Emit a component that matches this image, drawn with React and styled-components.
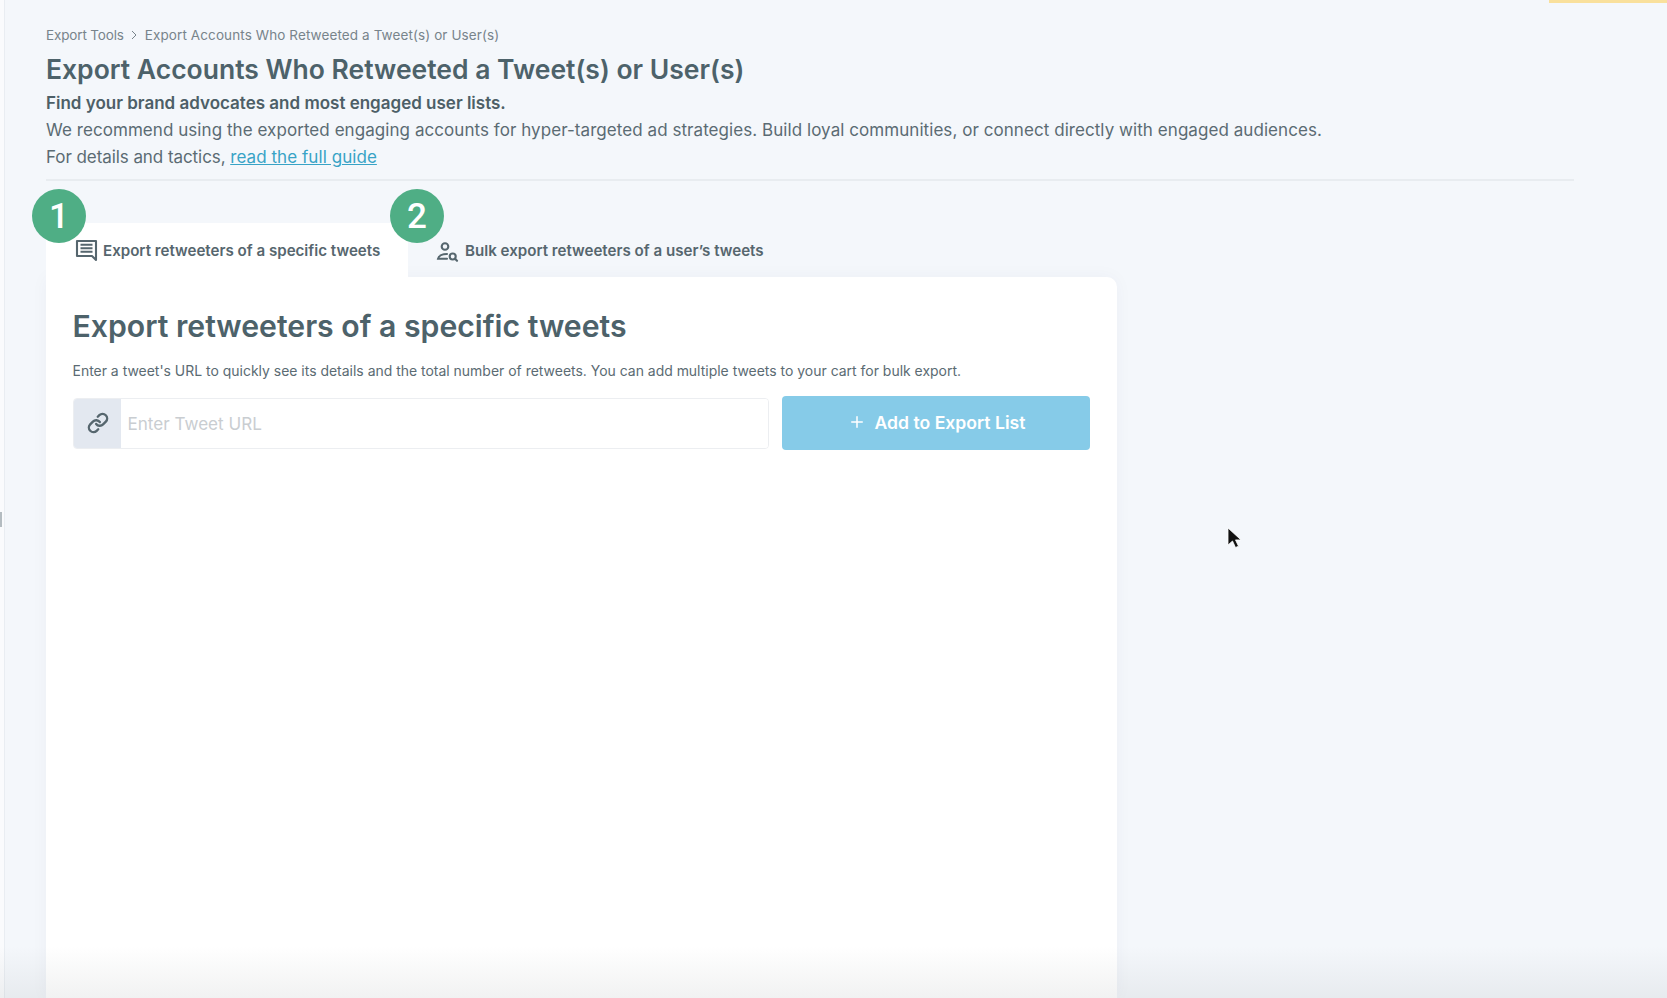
import styled, { createGlobalStyle } from 'styled-components';
import { Link, Plus } from 'lucide-react';

const GlobalStyle = createGlobalStyle`
  html, body {
    margin: 0;
    padding: 0;
    height: 100%;
    overflow: hidden;
    background: #f4f7fb;
  }
  * {
    box-sizing: border-box;
  }
`;

const StyledPage = styled.div`
  position: relative;
  display: flex;
  height: 100vh;
  overflow: hidden;
  font-family: Inter, 'Liberation Sans', sans-serif;
  color: #5b6b73;
`;

const StyledRail = styled.div`
  position: relative;
  flex: 0 0 5px;
  background: #fafbfd;
  border-right: 1px solid #e9edf2;
  &::before {
    content: '';
    position: absolute;
    left: 0;
    top: 512px;
    width: 2px;
    height: 15px;
    background: #b4bcc1;
  }
`;

const StyledMain = styled.main`
  flex: 1;
  display: flex;
  flex-direction: column;
  min-width: 0;
  padding: 25px 93px 0 41px;
`;

const StyledCrumbs = styled.nav`
  display: flex;
  align-items: center;
  gap: 5.5px;
  height: 20px;
  font-size: 13.5px;
  letter-spacing: 0.1px;
  color: #78848b;
`;

const StyledCrumbRoot = styled.span`
  letter-spacing: -0.15px;
`;

const StyledTitle = styled.h1`
  margin: 6px 0 0;
  font-size: 26.5px;
  line-height: 36px;
  font-weight: 600;
  color: #4d626a;
`;

const StyledLead = styled.p`
  margin: 3px 0 0;
  font-size: 17px;
  line-height: 27px;
  font-weight: 600;
  color: #4d5f67;
`;

const StyledText = styled.p`
  margin: 0;
  font-size: 17px;
  line-height: 26.5px;
  letter-spacing: ${props => (props.$tight ? '-0.07px' : '0.06px')};
`;

const StyledGuide = styled.a`
  letter-spacing: 0.06px;
  color: #38a3c6;
  text-decoration: underline;
`;

const StyledDivider = styled.hr`
  width: 100%;
  height: 2px;
  margin: 9px 0 0;
  border: 0;
  background: #e8ecf0;
`;

const StyledTabs = styled.div`
  display: flex;
  height: 54px;
  margin-top: 42px;
`;

const StyledTab = styled.button`
  position: relative;
  display: flex;
  align-items: center;
  gap: ${props => (props.$active ? '4px' : '5px')};
  height: 54px;
  width: ${props => (props.$active ? '362px' : 'auto')};
  padding: 0 0 0 ${props => (props.$active ? '29px' : '28px')};
  border: 0;
  background: ${props => (props.$active ? '#fff' : 'transparent')};
  font: 600 15.12px Inter, 'Liberation Sans', sans-serif;
  color: #56666e;
`;

const StyledBadge = styled.span`
  position: absolute;
  top: -34px;
  left: ${props => props.$left}px;
  display: flex;
  align-items: center;
  justify-content: center;
  width: 54px;
  height: 54px;
  border-radius: 50%;
  background: #4fae85;
  font: 500 35px Roboto, 'Liberation Sans', sans-serif;
  color: #fff;
`;

const StyledCard = styled.section`
  flex: 1;
  width: 1071px;
  padding: 29px 25px 0 26.5px;
  border-radius: 0 10px 0 0;
  background: #fff;
  box-shadow: 0 0 18px rgba(60, 60, 90, 0.04);
`;

const StyledHeading = styled.h2`
  margin: 0;
  font-size: 30.2px;
  line-height: 40px;
  font-weight: 600;
  color: #4d626a;
`;

const StyledHint = styled.p`
  margin: 15px 0 0;
  font-size: 13.96px;
  line-height: 20px;
  color: #5b6b73;
`;

const StyledForm = styled.div`
  display: flex;
  align-items: center;
  gap: 13px;
  margin-top: 15px;
`;

const StyledField = styled.div`
  display: flex;
  width: 696px;
  height: 51px;
  border: 1px solid #eceef1;
  border-radius: 4px;
  overflow: hidden;
`;

const StyledPrefix = styled.span`
  display: flex;
  align-items: center;
  justify-content: center;
  flex: 0 0 47px;
  padding-left: 2px;
  background: #e3e8f0;
  color: #56666e;
`;

const StyledInput = styled.input`
  flex: 1;
  min-width: 0;
  padding: 1px 7px 0;
  border: 0;
  outline: 0;
  font: 400 17.1px Inter, 'Liberation Sans', sans-serif;
  color: #56666e;
  &::placeholder {
    color: #c9cdd1;
  }
`;

const StyledAddButton = styled.button`
  display: flex;
  align-items: center;
  justify-content: center;
  gap: 9px;
  width: 308px;
  height: 54px;
  padding: 0 0 2px 2px;
  border: 0;
  border-radius: 4px;
  background: #86cbe8;
  font: 600 17.6px Inter, 'Liberation Sans', sans-serif;
  color: #fff;
`;

const StyledTopAccent = styled.div`
  position: absolute;
  top: 0;
  right: 0;
  width: 118px;
  height: 3px;
  background: #f9e09c;
`;

const StyledFade = styled.div`
  position: absolute;
  left: 0;
  right: 0;
  bottom: 0;
  height: 52px;
  background: linear-gradient(to bottom, rgba(80, 90, 90, 0), rgba(80, 90, 90, 0.08));
  pointer-events: none;
`;

const StyledCursor = styled.svg`
  position: absolute;
  left: 1226px;
  top: 526px;
`;

const ChatLinesIcon = () => (
  <svg width='24' height='24' viewBox='0 0 24 24' fill='none' stroke='currentColor' strokeWidth='2.1' strokeLinejoin='round'>
    <path d='M2 3h19v19l-4-4H2z' />
    <path d='M5.500 6.800h12M5.500 10.300h12M5.500 13.800h12' />
  </svg>
);

const UserSearchIcon = () => (
  <svg width='24' height='24' viewBox='0 0 24 24' fill='none' stroke='currentColor' strokeWidth='2.1' strokeLinecap='round'>
    <circle cx='9' cy='8.500' r='3.300' />
    <path d='M11 16c-4 0-8.500 1.500-9 4.800h9' />
    <circle cx='16.700' cy='18.500' r='3' />
    <path d='M19 20.800l2 2' />
  </svg>
);

const App = () => {
  return (
    <>
      <GlobalStyle />
      <StyledPage>
        <StyledRail />
        <StyledMain>
          <StyledCrumbs>
            <StyledCrumbRoot>Export Tools</StyledCrumbRoot>
            <svg width='10' height='10' viewBox='0 0 10 10' fill='none' stroke='currentColor'>
              <path d='M3 1l4 4-4 4' />
            </svg>
            <span>Export Accounts Who Retweeted a Tweet(s) or User(s)</span>
          </StyledCrumbs>
          <StyledTitle>Export Accounts Who Retweeted a Tweet(s) or User(s)</StyledTitle>
          <StyledLead>Find your brand advocates and most engaged user lists.</StyledLead>
          <StyledText>
            We recommend using the exported engaging accounts for hyper-targeted ad strategies. Build loyal communities, or connect directly with engaged audiences.
          </StyledText>
          <StyledText $tight>
            For details and tactics, <StyledGuide href='#'>read the full guide</StyledGuide>
          </StyledText>
          <StyledDivider />
          <StyledTabs>
            <StyledTab type='button' $active>
              <StyledBadge $left={-14}>1</StyledBadge>
              <ChatLinesIcon />
              Export retweeters of a specific tweets
            </StyledTab>
            <StyledTab type='button'>
              <StyledBadge $left={-18}>2</StyledBadge>
              <UserSearchIcon />
              Bulk export retweeters of a user’s tweets
            </StyledTab>
          </StyledTabs>
          <StyledCard>
            <StyledHeading>Export retweeters of a specific tweets</StyledHeading>
            <StyledHint>
              Enter a tweet's URL to quickly see its details and the total number of retweets. You can add multiple tweets to your cart for bulk export.
            </StyledHint>
            <StyledForm>
              <StyledField>
                <StyledPrefix>
                  <Link size={22} strokeWidth={2.6} />
                </StyledPrefix>
                <StyledInput placeholder='Enter Tweet URL' />
              </StyledField>
              <StyledAddButton type='button'>
                <Plus size={18} />
                Add to Export List
              </StyledAddButton>
            </StyledForm>
          </StyledCard>
        </StyledMain>
        <StyledTopAccent />
        <StyledFade />
        <StyledCursor width='18' height='24' viewBox='0 0 18 24'>
          <path d='M2 2v17l4.500-4 3 6.500 3-1.300-3-6.300H15z' fill='#111' stroke='#fff' strokeWidth='0.800' />
        </StyledCursor>
      </StyledPage>
    </>
  );
};

export default App;
